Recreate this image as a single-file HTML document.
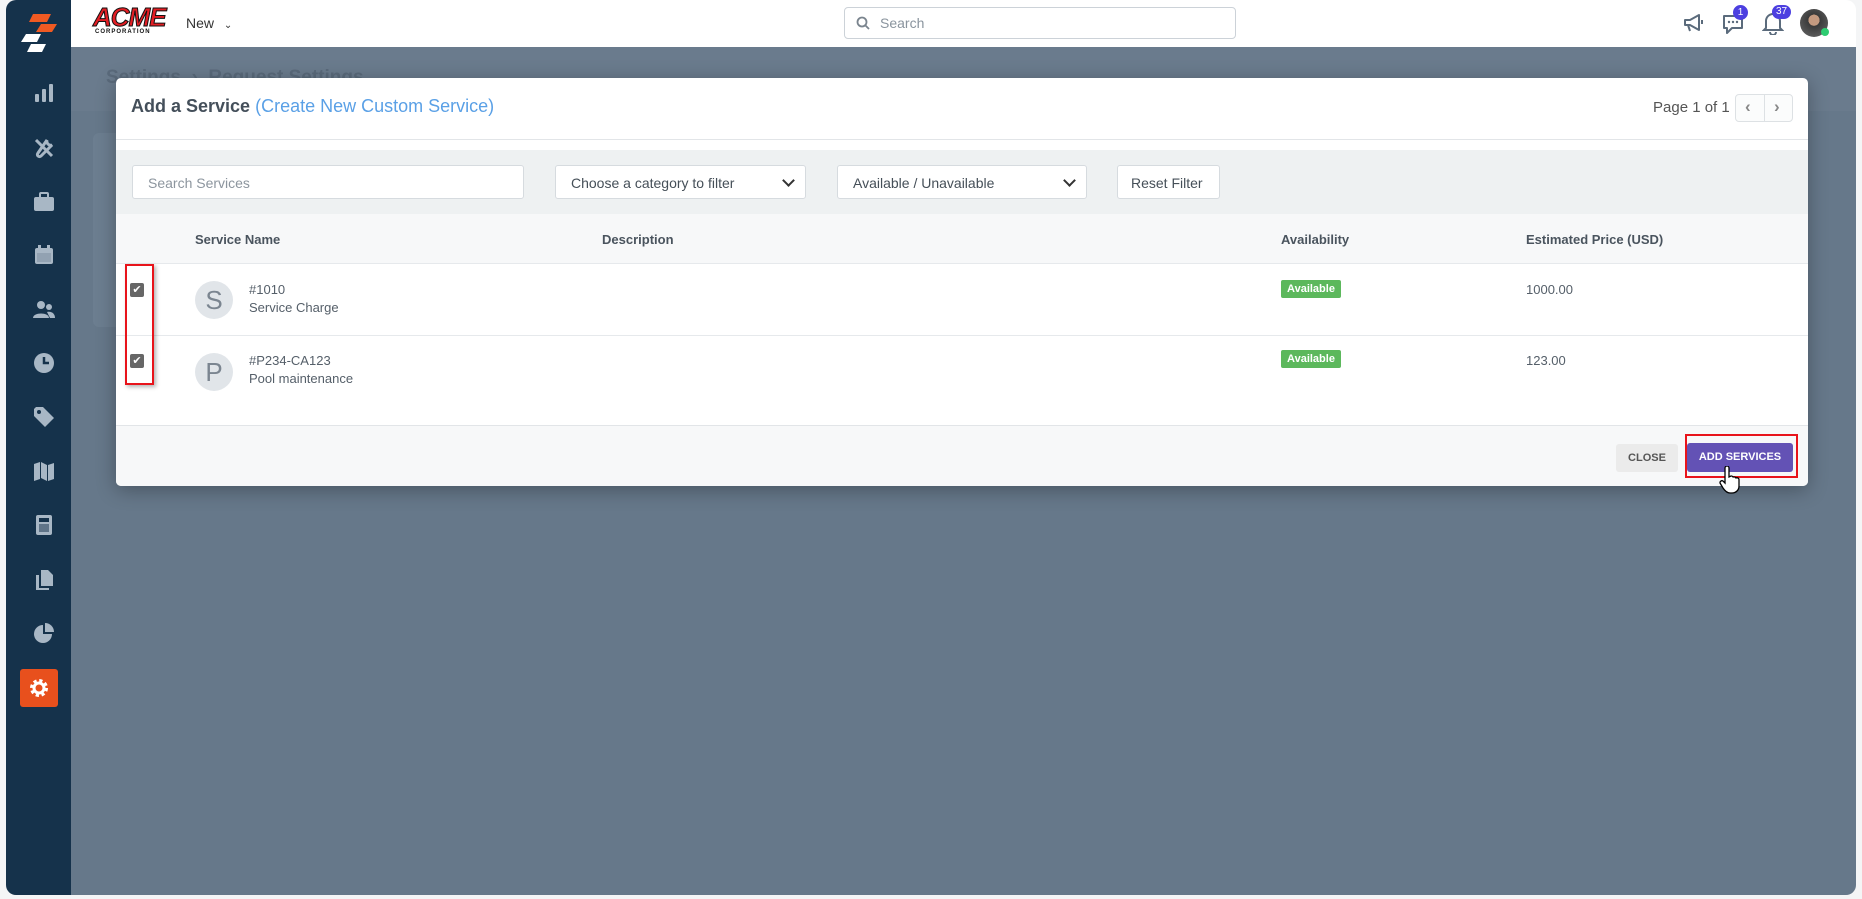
<!DOCTYPE html>
<html><head><meta charset="utf-8"><style>
*{box-sizing:border-box;margin:0;padding:0}
body{width:1862px;height:899px;overflow:hidden;background:#f4f5f6;font-family:"Liberation Sans",sans-serif;position:relative;color:#4a5560}
.abs{position:absolute}
#side{left:6px;top:0;width:65px;height:895px;background:#15324b;border-radius:10px 0 0 10px}
.ic{position:absolute;left:27px;width:22px;height:22px;fill:#a8b7c5}
#top{left:71px;top:0;width:1785px;height:47px;background:#fff;border-radius:0 10px 0 0}
#over{left:71px;top:47px;width:1785px;height:848px;background:#66788a;border-radius:0 0 10px 0}
#modal{left:116px;top:78px;width:1692px;height:408px;background:#fff;border-radius:5px;box-shadow:0 4px 20px rgba(0,0,0,.3);overflow:hidden}
.inp{position:absolute;top:15px;height:34px;background:#fff;border:1px solid #d6dbdf;border-radius:3px;font-size:14px;color:#454f58;padding:9px 15px}
.sel::after{content:"";position:absolute;right:12px;top:10px;width:7px;height:7px;border-right:2px solid #333;border-bottom:2px solid #333;transform:rotate(45deg)}
.th{position:absolute;top:116px;font-size:13px;font-weight:bold;color:#4a545e}
.cb{position:absolute;left:14px;width:14px;height:14px;background:#666;border-radius:2px;color:#fff;font-size:11px;line-height:14px;text-align:center}
.av{position:absolute;left:79px;width:38px;height:38px;border-radius:50%;background:#e1e5e9;color:#7b8590;font-size:26px;text-align:center;line-height:38px}
.t1{position:absolute;left:133px;font-size:13px;color:#555f69}
.badge{position:absolute;left:1165px;width:60px;height:18px;background:#5cb85c;color:#fff;font-size:11px;font-weight:bold;text-align:center;line-height:18px;border-radius:2px}
.pr{position:absolute;left:1410px;font-size:13px;color:#555f69}
</style></head><body>
<div id="side" class="abs">
 <svg class="abs" style="left:15px;top:14px" width="36" height="38" viewBox="0 0 36 38"><polygon points="12,0 30,0 26,8 8,8" fill="#f05a22"/><polygon points="20,10 36,10 31,18 15,18" fill="#f05a22"/><polygon points="5,20 20,20 16,28 0,28" fill="#fff"/><polygon points="10,30 25,30 21,38 6,38" fill="#fff"/></svg>
 <svg class="ic" style="top:82px" viewBox="0 0 22 22"><rect x="2" y="12" width="4" height="8" rx="1"/><rect x="9" y="7" width="4" height="13" rx="1"/><rect x="16" y="2" width="4" height="18" rx="1"/></svg>
 <svg class="ic" style="top:137px" viewBox="0 0 22 22"><path d="M3 3l6 6M9 9l10 10M14 3a4 4 0 0 0 5 5L8 19a2 2 0 0 1-3-3z" stroke="#a8b7c5" stroke-width="3" fill="none"/></svg>
 <svg class="ic" style="top:191px" viewBox="0 0 22 22"><rect x="1" y="6" width="20" height="14" rx="2"/><rect x="7" y="2" width="8" height="5" rx="1" fill="none" stroke="#a8b7c5" stroke-width="2"/></svg>
 <svg class="ic" style="top:244px" viewBox="0 0 22 22"><rect x="2" y="4" width="18" height="16" rx="2"/><rect x="5" y="1" width="3" height="5"/><rect x="14" y="1" width="3" height="5"/><rect x="4" y="9" width="14" height="9" fill="#15324b" opacity=".15"/></svg>
 <svg class="ic" style="top:299px" viewBox="0 0 22 22"><circle cx="8" cy="6" r="4"/><path d="M0 19c0-6 16-6 16 0z"/><circle cx="16" cy="8" r="3"/><path d="M14 13c5-1 8 2 8 6h-5z"/></svg>
 <svg class="ic" style="top:352px" viewBox="0 0 22 22"><circle cx="11" cy="11" r="10"/><path d="M11 5v6h5" stroke="#15324b" stroke-width="2.5" fill="none"/></svg>
 <svg class="ic" style="top:406px" viewBox="0 0 22 22"><path d="M1 3v7l11 11 9-9L10 1H3z"/><circle cx="6" cy="6" r="2" fill="#15324b"/></svg>
 <svg class="ic" style="top:460px" viewBox="0 0 22 22"><path d="M1 4l6-2v17l-6 2zM8 2l6 3v16l-6-3zM15 5l6-2v16l-6 2z"/></svg>
 <svg class="ic" style="top:514px" viewBox="0 0 22 22"><rect x="3" y="1" width="16" height="20" rx="2"/><rect x="6" y="4" width="10" height="4" fill="#15324b"/><rect x="6" y="10" width="10" height="8" fill="#15324b" opacity=".5"/></svg>
 <svg class="ic" style="top:569px" viewBox="0 0 22 22"><path d="M8 1h7l5 5v11H8z"/><path d="M3 6h3v13h10v2H3z"/></svg>
 <svg class="ic" style="top:622px" viewBox="0 0 22 22"><path d="M10 3a9 9 0 1 0 9 9h-9z"/><path d="M12 1a9 9 0 0 1 9 9h-9z"/></svg>
 <div class="abs" style="left:14px;top:669px;width:38px;height:38px;background:#e8501d;border-radius:3px"></div>
 <svg class="abs" style="left:23px;top:678px" width="20" height="20" viewBox="0 0 20 20"><circle cx="10" cy="10" r="7" fill="none" stroke="#fff" stroke-width="4" stroke-dasharray="3 2.5"/><circle cx="10" cy="10" r="5" fill="none" stroke="#fff" stroke-width="3"/></svg>
</div>
<div id="top" class="abs">
 <div class="abs" style="left:22px;top:6px;font:900 italic 26px/22px 'Liberation Sans';color:#e31e24;letter-spacing:-1px;-webkit-text-stroke:1px #111">ACME</div>
 <div class="abs" style="left:24px;top:29px;font:bold 6px 'Liberation Sans';color:#111;letter-spacing:1px">CORPORATION</div>
 <div class="abs" style="left:115px;top:15px;font-size:14px;color:#333">New <span style="font-size:10px;margin-left:6px">&#8964;</span></div>
 <div class="abs" style="left:773px;top:7px;width:392px;height:32px;border:1px solid #ccd2d8;border-radius:4px;font-size:14px;color:#8a949e;padding:7px 0 0 35px">Search
  <svg class="abs" style="left:11px;top:8px" width="14" height="14" viewBox="0 0 14 14"><circle cx="6" cy="6" r="4.5" stroke="#7a848e" stroke-width="1.8" fill="none"/><path d="M9.5 9.5l3.5 3.5" stroke="#7a848e" stroke-width="1.8"/></svg></div>
 <svg class="abs" style="left:1611px;top:12px" width="24" height="22" viewBox="0 0 24 22"><path d="M3 8h5l9-5v15l-9-5H3z M6 13l2 6" stroke="#5b6b7c" stroke-width="2" fill="none" stroke-linejoin="round"/><path d="M20 8v4" stroke="#5b6b7c" stroke-width="2"/></svg>
 <svg class="abs" style="left:1650px;top:12px" width="24" height="24" viewBox="0 0 24 24"><path d="M3 4h18v12h-10l-5 5v-5H3z" stroke="#5b6b7c" stroke-width="2" fill="none" stroke-linejoin="round"/><circle cx="8" cy="10" r="1.2" fill="#5b6b7c"/><circle cx="12" cy="10" r="1.2" fill="#5b6b7c"/><circle cx="16" cy="10" r="1.2" fill="#5b6b7c"/></svg>
 <div class="abs" style="left:1662px;top:5px;width:15px;height:15px;border-radius:50%;background:#4c3fe0;color:#fff;font-size:10px;text-align:center;line-height:15px">1</div>
 <svg class="abs" style="left:1691px;top:11px" width="22" height="24" viewBox="0 0 22 24"><path d="M4 17V10a7 7 0 0 1 14 0v7l2 2H2z M8 21a3 3 0 0 0 6 0" stroke="#5b6b7c" stroke-width="2" fill="none"/></svg>
 <div class="abs" style="left:1701px;top:5px;width:19px;height:14px;border-radius:7px;background:#4c3fe0;color:#fff;font-size:10px;text-align:center;line-height:14px">37</div>
 <div class="abs" style="left:1729px;top:9px;width:28px;height:28px;border-radius:50%;background:radial-gradient(circle at 50% 40%,#c49a80 0 25%,#3a3a3a 26%,#6a6a6a 100%)"></div>
 <div class="abs" style="left:1750px;top:28px;width:8px;height:8px;border-radius:50%;background:#2ecc71"></div>
</div>
<div id="over" class="abs">
 <div class="abs" style="left:0;top:0;width:100%;height:64px;background:#6a7b8d"></div>
 <div class="abs" style="left:35px;top:20px;font-size:19px;font-weight:bold;color:#5a6a7b">Settings &nbsp;›&nbsp; Request Settings</div>
 <div class="abs" style="left:22px;top:86px;width:60px;height:194px;background:#6c7e90;border-radius:6px"></div>
</div>
<div id="modal" class="abs">
 <div class="abs" style="left:15px;top:18px;font-size:18px;color:#444f5a"><b>Add a Service</b> <span style="color:#5aa0e6">(Create New Custom Service)</span></div>
 <div class="abs" style="left:1537px;top:21px;font-size:15px;color:#555">Page 1 of 1</div>
 <div class="abs" style="left:1619px;top:16px;width:58px;height:28px;border:1px solid #dde1e4;border-radius:4px;background:#fbfcfc"><div class="abs" style="left:28px;top:0;width:1px;height:26px;background:#dde1e4"></div><span class="abs" style="left:9px;top:2px;font-size:17px;color:#888;font-weight:bold">‹</span><span class="abs" style="left:38px;top:2px;font-size:17px;color:#888;font-weight:bold">›</span></div>
 <div class="abs" style="left:0;top:61px;width:100%;height:1px;background:#e2e5e8"></div>
 <div class="abs" style="left:0;top:72px;width:100%;height:64px;background:#eef1f2">
  <div class="inp" style="left:16px;width:392px;color:#8c959e">Search Services</div>
  <div class="inp sel" style="left:439px;width:251px">Choose a category to filter</div>
  <div class="inp sel" style="left:721px;width:250px">Available / Unavailable</div>
  <div class="inp" style="left:1001px;width:103px;padding-left:13px">Reset Filter</div>
 </div>
 <div class="abs" style="left:0;top:136px;width:100%;height:50px;background:#f7f8f9;border-bottom:1px solid #e6e9ec"></div>
 <div class="th" style="left:79px;top:154px">Service Name</div>
 <div class="th" style="left:486px;top:154px">Description</div>
 <div class="th" style="left:1165px;top:154px">Availability</div>
 <div class="th" style="left:1410px;top:154px">Estimated Price (USD)</div>
 <div class="abs" style="left:0;top:257px;width:100%;height:1px;background:#e6e9ec"></div>
 <div class="cb" style="top:205px">✔</div><div class="cb" style="top:276px">✔</div>
 <div class="abs" style="left:9px;top:186px;width:29px;height:121px;border:2px solid #e8141b;box-shadow:2px 2px 4px rgba(0,0,0,.3)"></div>
 <div class="av" style="top:203px">S</div><div class="av" style="top:275px">P</div>
 <div class="t1" style="top:204px">#1010</div><div class="t1" style="top:222px">Service Charge</div>
 <div class="t1" style="top:275px">#P234-CA123</div><div class="t1" style="top:293px">Pool maintenance</div>
 <div class="badge" style="top:202px">Available</div><div class="badge" style="top:272px">Available</div>
 <div class="pr" style="top:204px">1000.00</div><div class="pr" style="top:275px">123.00</div>
 <div class="abs" style="left:0;top:347px;width:100%;height:61px;background:#f7f8f9;border-top:1px solid #e2e5e8">
  <div class="abs" style="left:1500px;top:18px;width:62px;height:28px;background:#ebebeb;border-radius:3px;font:bold 11px/28px 'Liberation Sans';color:#555;text-align:center">CLOSE</div>
  <div class="abs" style="left:1571px;top:17px;width:106px;height:29px;background:#6352b5;border-radius:3px;font:bold 11px/29px 'Liberation Sans';color:#fff;text-align:center">ADD SERVICES</div>
  <div class="abs" style="left:1569px;top:8px;width:113px;height:44px;border:2px solid #e8141b"></div>
 </div>
</div>
<svg class="abs" style="left:1719px;top:466px" width="22" height="28" viewBox="0 0 22 28"><path d="M6 2a2 2 0 0 1 4 0v9l2-1a2 2 0 0 1 2 1l1 0a2 2 0 0 1 2 1 2 2 0 0 1 3 2v6c0 4-3 7-7 7h-2c-3 0-5-2-7-5l-3-5a2 2 0 0 1 3-2l2 2z" fill="#fff" stroke="#000" stroke-width="1.3"/></svg>
</body></html>
